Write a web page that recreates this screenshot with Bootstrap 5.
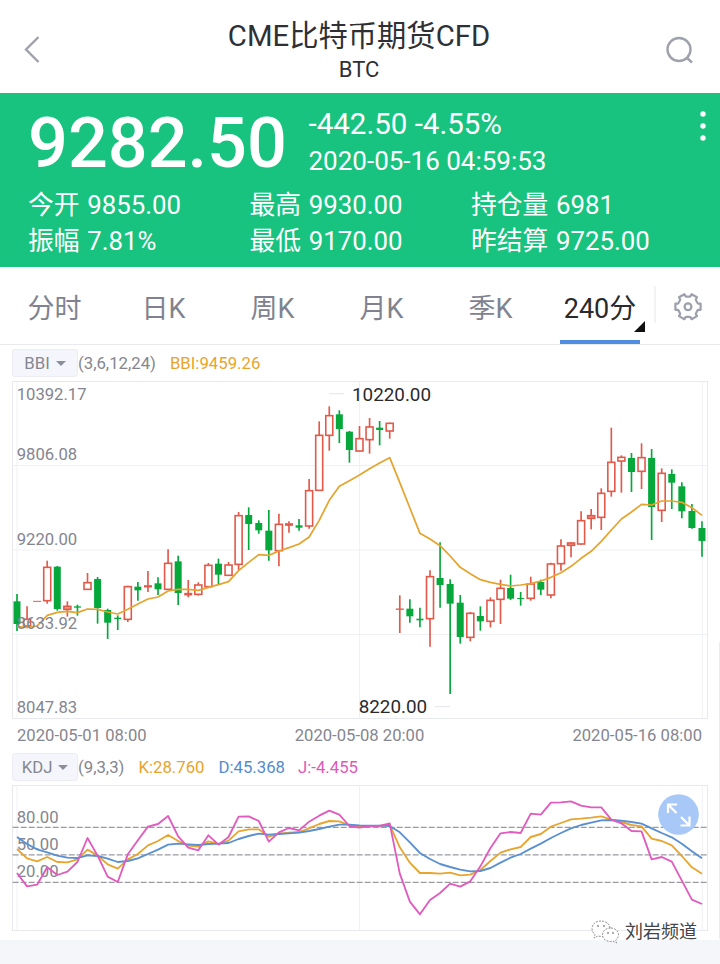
<!DOCTYPE html>
<html lang="zh-CN">
<head>
<meta charset="utf-8">
<meta name="viewport" content="width=device-width, initial-scale=1">
<title>CME比特币期货CFD</title>
<link href="https://cdn.jsdelivr.net/npm/bootstrap@5.3.0/dist/css/bootstrap.min.css" rel="stylesheet">
<style>
body{font-family:Roboto,"Noto Sans CJK SC",sans-serif;background:#f5f6fa;color:#2f3033;width:720px;height:964px;overflow:hidden;line-height:1}
.screen{height:940px}
.topbar{height:93px;padding:0 26px 0 24px}
.topbar .ttl{font-size:29.3px;line-height:36px;margin-top:18px}
.topbar .sub{font-size:22px;line-height:26px;margin-top:3px}
.side{width:28px}
.quote{background:#17c37e;height:174px;color:#fff;padding:0 28px}
.price{font-size:70.2px;font-weight:500;line-height:80px;width:280.5px;padding-top:10px}
.chg{font-size:29.5px;line-height:37px;padding-top:13px}
.tm{font-size:26px;line-height:37px}
.stats{font-size:25.8px;line-height:35.5px;word-spacing:1.2px;grid-template-columns:221.5px 221.5px 1fr;margin-top:5px}
.kebab{right:14px;top:18px}
.tabs{height:78px;border-bottom:1px solid #e9eaed;font-size:27px;color:#80838f}
.tabs .tab-i{width:109px;height:77px;padding-top:8px}
.tabs .on{color:#2a2a2c;width:80px}
.tabs .on::after{content:"";position:absolute;left:0;right:0;bottom:0;height:4px;background:#4f8de0}
.tabs .on::before{content:"";position:absolute;right:-5px;bottom:12px;border-left:11px solid transparent;border-bottom:11px solid #111}
.vsep{width:2px;height:37px;background:#f3f3f6;margin:19px 0 0 14px}
.ind{font-size:16.75px;line-height:28px;height:28px;padding-left:12px;color:#85868f}
.pick{width:66px;height:28px;background:#f5f6fb;border:1px solid #ececf2;border-radius:3px}
.caret{border:5px solid transparent;border-top-color:#8c8e99;border-bottom:0;margin-left:6px}
.or{color:#e9a42b}.bl{color:#548bd0}.pk{color:#df58b9}
.dates{font-size:16.65px;line-height:20px;height:20px;color:#85868f;padding:0 18px 0 17px}
svg{display:block}
svg text{font-size:50px;fill:#83858f}
svg text.dk{font-size:56.5px;fill:#2a2a2c}
.zoomer{left:658px;top:794px}
.wm{right:23px;top:918px;font-size:18px;color:#444;line-height:27px;text-shadow:-1px -1px 0 #fff,-1px 0 0 #fff}
.edge{right:0;top:642px;width:1px;height:297px;background:#ececf0}
</style>
</head>
<body class="position-relative">
<div class="screen bg-white">
  <header class="topbar d-flex justify-content-between">
    <div class="side pt-4"><svg class="mt-2 pt-1" width="16" height="36" viewBox="0 0 16 32" fill="none" stroke="#9fa1ac" stroke-width="2.4"><path d="M14.500 1 2 13.500 14.500 26"/></svg></div>
    <div class="text-center"><div class="ttl">CME比特币期货CFD</div><div class="sub">BTC</div></div>
    <div class="side"><svg style="margin-top:36px" width="30" height="30" viewBox="0 0 30 30" fill="none" stroke="#9fa1ac" stroke-width="2.400"><circle cx="13" cy="13.500" r="11.500"/><path d="m20.500 21.500 5.500 5"/></svg></div>
  </header>
  <section class="quote position-relative">
    <div class="d-flex">
      <div class="price">9282.50</div>
      <div><div class="chg">-442.50 -4.55%</div><div class="tm">2020-05-16 04:59:53</div></div>
    </div>
    <div class="stats d-grid">
      <span>今开 9855.00</span><span>最高 9930.00</span><span>持仓量 6981</span>
      <span>振幅 7.81%</span><span>最低 9170.00</span><span>昨结算 9725.00</span>
    </div>
    <svg class="kebab position-absolute" width="6" height="32" fill="#fff"><circle cx="3" cy="3" r="2.700"/><circle cx="3" cy="15" r="2.700"/><circle cx="3" cy="27" r="2.700"/></svg>
  </section>
  <nav class="tabs d-flex">
    <div class="tab-i d-flex align-items-center justify-content-center">分时</div>
    <div class="tab-i d-flex align-items-center justify-content-center">日K</div>
    <div class="tab-i d-flex align-items-center justify-content-center">周K</div>
    <div class="tab-i d-flex align-items-center justify-content-center">月K</div>
    <div class="tab-i d-flex align-items-center justify-content-center">季K</div>
    <div class="tab-i on position-relative d-flex align-items-center justify-content-center ms-auto">240分</div>
    <div class="vsep"></div>
    <svg class="flex-shrink-0" id="gear" width="64" height="77" viewBox="0 0 64 77" fill="none" stroke="#9da0ab" stroke-width="2.200" stroke-linejoin="round"></svg>
  </nav>
  <div class="ind d-flex" style="margin-top:4px">
    <div class="pick d-flex align-items-center justify-content-center">BBI<span class="caret"></span></div>
    <span>(3,6,12,24)</span><span class="or" style="margin-left:14px">BBI:9459.26</span>
  </div>
  <svg id="main" width="720" height="347" viewBox="0 6 2160 1041"></svg>
  <div class="dates d-flex justify-content-between" style="margin-top:2px"><span>2020-05-01 08:00</span><span>2020-05-08 20:00</span><span>2020-05-16 08:00</span></div>
  <div class="ind d-flex" style="margin-top:7px">
    <div class="pick d-flex align-items-center justify-content-center">KDJ<span class="caret"></span></div>
    <span>(9,3,3)</span><span class="or" style="margin-left:14px">K:28.760</span><span class="bl" style="margin-left:14px">D:45.368</span><span class="pk" style="margin-left:13px">J:-4.455</span>
  </div>
  <svg id="kdj" width="720" height="153" viewBox="0 183 2160 459"></svg>
</div>
<div class="edge position-absolute"></div>
<svg class="zoomer position-absolute" width="41" height="41" viewBox="0 0 41 41"><circle cx="20.500" cy="20.500" r="20.300" fill="#a8c8f8"/><path d="M18.500 19 10.500 11M10 19V10.500H19M23 23l8 8M22.500 31.500H31.500V22.500" fill="none" stroke="#fff" stroke-width="2.200"/></svg>
<div class="wm position-absolute d-flex align-items-center">
  <svg width="30" height="26" viewBox="0 0 30 26" fill="#fff" stroke="#777" stroke-width=".8" stroke-dasharray="2 1.200"><path d="M10 2C5 2 1 5 1 9.500c0 3 1.500 4.600 3 5.800L3 19l4-2c5 1.500 12-1 12-7.500C19 5 15 2 10 2Z"/><path d="M19.500 9c-4.500 0-8 3-8 6.700 0 4 3.500 6.800 8 6.800l2.500-.4 3.500 1.900-.8-3c1.800-1.300 2.800-3 2.800-5.300C27.500 12 24 9 19.500 9Z"/><g fill="#444" stroke="none"><circle cx="7" cy="7" r=".8"/><circle cx="13" cy="7" r=".8"/><circle cx="17" cy="14" r=".8"/><circle cx="22" cy="14" r=".8"/></g></svg>
  <span style="margin-left:4px">刘岩频道</span>
</div>
<script>
const X=i=>51+i*30.22, RED='#e2594a', GREEN='#06a83c';
// candle: direction, high, body top, body bottom, low
const candles=`g 657 680 746 768,r 694 733 753 757,r 679 679 679 679,r 557 577 677 686,g 573 576 701 707,r 679 694 703 725,g 689 695 697 722,r 594 623 643 643,g 606 613 698 746,g 701 706 742 792,g 721 729 731 765,r 632 635 733 741,g 621 636 645 677,r 588 632 636 651,g 607 626 642 660,r 523 565 643 643,g 542 560 653 690,r 615 655 660 667,r 622 630 658 662,r 564 571 635 635,g 551 567 598 627,r 561 570 601 603,r 411 422 568 585,g 397 421 446 525,g 436 445 465 476,g 405 468 525 557,r 416 448 527 574,r 439 446 451 473,g 432 452 457 467,r 312 347 453 461,r 139 181 346 348,r 94 122 181 227,g 106 119 161 204,g 168 171 224 263,r 153 191 228 230,r 129 156 194 236,g 138 159 164 211,r 143 145 168 191,r 661 702 703 774,g 673 702 723 743,g 698 732 735 757,r 586 605 731 815,g 502 610 629 698,g 613 628 685 957,g 660 684 785 806,r 711 715 787 799,g 694 724 738 767,r 667 676 739 757,r 614 640 673 747,g 599 640 670 675,g 651 670 671 692,r 605 627 670 677,g 614 622 643 660,r 563 567 660 670,r 493 513 566 587,r 501 504 511 547,r 409 437 507 509,r 402 422 430 463,r 340 355 427 465,r 158 262 349 365,r 241 247 258 353,g 234 250 290 351,r 205 248 289 342,g 222 250 395 495,r 280 295 406 441,g 283 298 322 402,g 322 335 408 430,g 387 409 458 461,g 439 460 497 545`.split(',').map(s=>s.split(' '));
const bbi=[755,757,753,721,712,709,713,702,703,711,717,703,687,672,666,648,643,643,646,637,629,620,587,562,539,541,528,518,507,486,436,376,334,317,300,281,264,248,323,399,475,492,512,543,577,596,614,622,628,633,630,626,618,607,593,574,550,529,499,465,432,411,388,390,378,378,382,398,421];
const K=[387,415,424,411,426,427,418,389,406,433,446,418,402,376,363,345,363,377,380,364,372,362,334,328,328,350,341,338,336,325,312,303,304,316,320,318,318,314,382,428,459,459,461,458,466,464,450,423,398,388,381,351,342,320,309,298,296,293,289,299,306,315,319,356,363,376,408,442,461];
const D=[351,372,388,397,407,413,414,406,408,416,426,423,415,402,389,374,371,373,375,372,371,369,357,348,341,344,342,340,338,333,327,320,314,314,316,317,317,318,337,367,399,417,432,441,449,454,453,444,428,413,402,386,371,354,339,325,315,308,301,300,302,306,311,325,339,352,371,394,415];
const J=[459,499,494,442,465,455,426,354,407,470,486,403,361,320,312,288,349,383,391,346,374,351,290,289,303,365,337,324,331,305,287,272,284,318,323,318,318,310,461,545,583,540,519,491,500,484,439,384,340,336,339,281,284,248,247,244,257,262,262,299,310,333,334,418,411,425,482,539,552];
const line=(x1,y1,x2,y2,c,w=3,e='')=>`<line x1="${x1}" y1="${y1}" x2="${x2}" y2="${y2}" stroke="${c}" stroke-width="${w}" ${e}/>`;
const poly=(a,c,w=5.2)=>`<polyline fill="none" stroke="${c}" stroke-width="${w}" stroke-linejoin="round" points="${a.map((y,i)=>X(i).toFixed(1)+','+y).join(' ')}"/>`;
const frame=(t,b)=>`<rect x="37.500" y="${t}" width="2085" height="${b-t}" fill="none" stroke="#e8e9ee" stroke-width="3"/>`+[51,1078.5,2107].map(x=>line(x,t,x,b,'#eff1f4')).join('');
let m=frame(19.5,1030.5)+[271.5,525,778.5].map(y=>line(38,y,2122,y,'#eff1f4')).join('');
candles.forEach(([k,h,t,b,l],i)=>{
  [h,t,b,l]=[h,t,b,l].map(Number);
  const x=X(i);
  if(k==='g'){m+=line(x,h,x,l,GREEN,5);m+=`<rect x="${x-10.5}" y="${t-1}" width="21" height="${b-t+2}" fill="${GREEN}"/>`;}
  else{
    if(h<t)m+=line(x,h,x,t,RED,5); if(l>b)m+=line(x,b,x,l,RED,5);
    m+=b-t<6?`<rect x="${x-12}" y="${t-1.5}" width="24" height="${b-t+3}" fill="${RED}"/>`:`<rect x="${x-10.5}" y="${t}" width="21" height="${b-t}" fill="${b-t<10?'#efa097':'#fff'}" stroke="${RED}" stroke-width="4.8"/>`;
  }
});
m+=poly(bbi,'#e5a42d');
[['10392.17',75],['9806.08',255],['9220.00',509],['8633.92',762],['8047.83',1015]].forEach(([s,y])=>m+=`<text x="50" y="${y}">${s}</text>`);
m+=`<text class="dk" x="1056" y="79">10220.00</text><text class="dk" x="1076" y="1015">8220.00</text>`+line(988,56,1033,56,'#e4e5e9')+line(1305,995,1350,995,'#e4e5e9');
main.innerHTML=m;
let q=frame(196.5,631.5)+[322,404.5,487].map(y=>line(38,y,2122,y,'#999ba1',4,'stroke-dasharray="18 6"')).join('');
q+=[['80.00',308],['50.00',390],['20.00',472]].map(([s,y])=>`<text x="50" y="${y}">${s}</text>`).join('');
q+=poly(K,'#e7a52f',5.5)+poly(D,'#5a8fd2',5.5)+poly(J,'#e05bbd',5.5);
kdj.innerHTML=q;
// six-tooth cog
const pts=[];
for(let i=0;i<6;i++){[[-24,10.2],[-17,10.6],[-14,13],[14,13],[17,10.6],[24,10.2]].forEach(([o,r])=>{const t=(i*60+o)*Math.PI/180;pts.push((32+r*Math.cos(t)).toFixed(1)+','+(39.7+r*Math.sin(t)).toFixed(1));});}
gear.innerHTML=`<polygon points="${pts.join(' ')}"/><circle cx="32" cy="39.7" r="3.4"/>`;
</script>
<script src="https://cdn.jsdelivr.net/npm/bootstrap@5.3.0/dist/js/bootstrap.bundle.min.js"></script>
</body>
</html>
